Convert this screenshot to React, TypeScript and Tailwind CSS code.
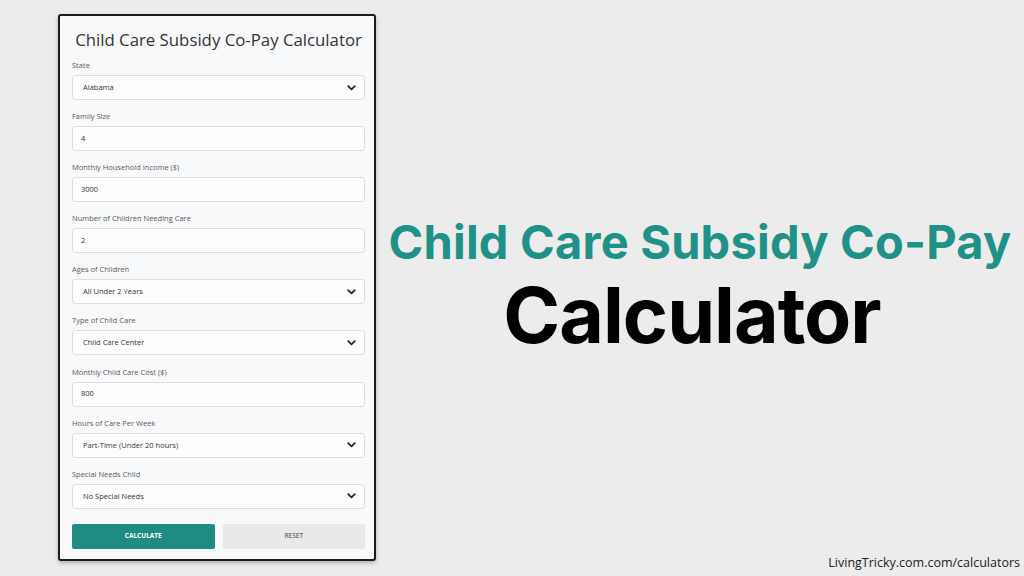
import React from 'react';

type Field = {
  label: string;
  value: string;
  select?: boolean;
};

const fields: Field[] = [
  { label: 'State', value: 'Alabama', select: true },
  { label: 'Family Size', value: '4' },
  { label: 'Monthly Household Income ($)', value: '3000' },
  { label: 'Number of Children Needing Care', value: '2' },
  { label: 'Ages of Children', value: 'All Under 2 Years', select: true },
  { label: 'Type of Child Care', value: 'Child Care Center', select: true },
  { label: 'Monthly Child Care Cost ($)', value: '800' },
  { label: 'Hours of Care Per Week', value: 'Part-Time (Under 20 hours)', select: true },
  { label: 'Special Needs Child', value: 'No Special Needs', select: true },
];

function Chevron() {
  return (
    <svg width="9" height="6" viewBox="0 0 9 6" className="shrink-0">
      <polyline points="1.2,1.2 4.5,4.4 7.8,1.2" fill="none" stroke="#222" strokeWidth="1.7" strokeLinecap="round" strokeLinejoin="round" />
    </svg>
  );
}

function FormField({ field }: { field: Field }) {
  return (
    <div className="flex flex-col">
      <div className="h-[12px] text-[7.5px] leading-[12px] text-[#5a5a5a]">{field.label}</div>
      <div className="mt-[4px] flex h-[25px] items-center justify-between rounded-[3px] border border-[#dedede] bg-[#fdfdfd] pl-[8px] pr-[8px] text-[7.5px] text-[#333]">
        <span className={field.select ? 'pl-[2px]' : ''}>{field.value}</span>
        {field.select && <Chevron />}
      </div>
    </div>
  );
}

export default function App() {
  return (
    <div className="flex h-[576px] w-[1024px] overflow-hidden bg-[#ececec]" style={{ fontFamily: '"Open Sans", "Liberation Sans", sans-serif' }}>
      <div className="pl-[58px] pt-[14px]">
        <div className="flex h-[547px] w-[318px] flex-col rounded-[3px] border-2 border-[#1c1c1c] bg-[#f8f9fa] pl-[12px] pr-[9px] pt-[11px] shadow-[0_2px_4px_rgba(0,0,0,0.25)]">
          <h1 className="whitespace-nowrap text-center text-[16.8px] font-medium leading-[25px] text-[#333]">
            Child Care Subsidy Co-Pay Calculator
          </h1>
          <div className="mt-[7px] flex flex-col gap-[10.1px]">
            {fields.map((f) => (
              <FormField key={f.label} field={f} />
            ))}
          </div>
          <div className="mt-[15px] grid grid-cols-2 gap-[8px]">
            <button className="h-[25px] rounded-[2px] bg-[#1e8c82] text-[6.5px] font-bold text-white">CALCULATE</button>
            <button className="h-[25px] rounded-[2px] bg-[#e9e9e9] text-[6.5px] font-semibold text-[#666]">RESET</button>
          </div>
        </div>
      </div>
      <div className="flex flex-1 flex-col">
        <div className="flex flex-1 flex-col items-center justify-center pt-[14px]" style={{ fontFamily: 'Inter, "Liberation Sans", sans-serif' }}>
          <div className="whitespace-nowrap text-[47px] font-bold leading-[56px] tracking-[0.2px] text-[#1f9187]">Child Care Subsidy Co-Pay</div>
          <div className="mt-[5px] pr-[16px] text-[77px] font-bold leading-[80px] tracking-[-1px] text-black">Calculator</div>
        </div>
        <div className="self-end pb-[4px] pr-[4px] text-[12.5px] leading-[18px] text-[#222]">LivingTricky.com.com/calculators</div>
      </div>
    </div>
  );
}
